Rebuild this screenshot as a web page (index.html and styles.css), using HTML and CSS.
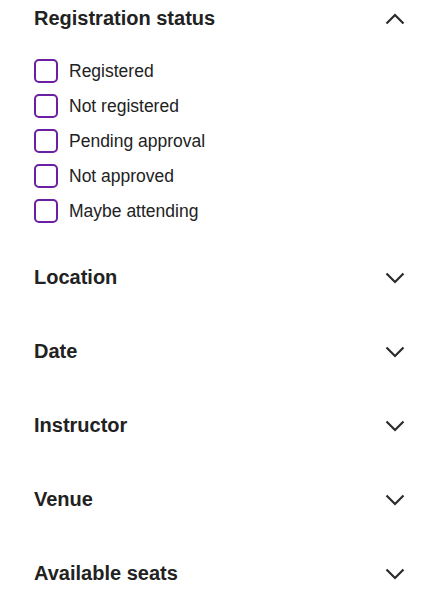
FILE: index.html
```html
<!DOCTYPE html>
<html lang="en">
<head>
<meta charset="utf-8">
<title>Filters</title>
<link rel="stylesheet" href="styles.css">
</head>
<body>
<div class="filters">
  <section class="filter open">
    <div class="filter-head">
      <h2 class="filter-title">Registration status</h2>
      <svg class="chev up" width="20" height="12" viewBox="0 0 20 12"><polyline points="1.5,10.5 10,2 18.5,10.5" fill="none" stroke="#2b2b2b" stroke-width="2.2"/></svg>
    </div>
    <ul class="options">
      <li class="option"><span class="box"></span><span>Registered</span></li>
      <li class="option"><span class="box"></span><span>Not registered</span></li>
      <li class="option"><span class="box"></span><span>Pending approval</span></li>
      <li class="option"><span class="box"></span><span>Not approved</span></li>
      <li class="option"><span class="box"></span><span>Maybe attending</span></li>
    </ul>
  </section>
  <section class="filter">
    <div class="filter-head">
      <h2 class="filter-title">Location</h2>
      <svg class="chev" width="20" height="12" viewBox="0 0 20 12"><polyline points="1.5,1.5 10,10 18.5,1.5" fill="none" stroke="#2b2b2b" stroke-width="2.2"/></svg>
    </div>
  </section>
  <section class="filter">
    <div class="filter-head">
      <h2 class="filter-title">Date</h2>
      <svg class="chev" width="20" height="12" viewBox="0 0 20 12"><polyline points="1.5,1.5 10,10 18.5,1.5" fill="none" stroke="#2b2b2b" stroke-width="2.2"/></svg>
    </div>
  </section>
  <section class="filter">
    <div class="filter-head">
      <h2 class="filter-title">Instructor</h2>
      <svg class="chev" width="20" height="12" viewBox="0 0 20 12"><polyline points="1.5,1.5 10,10 18.5,1.5" fill="none" stroke="#2b2b2b" stroke-width="2.2"/></svg>
    </div>
  </section>
  <section class="filter">
    <div class="filter-head">
      <h2 class="filter-title">Venue</h2>
      <svg class="chev" width="20" height="12" viewBox="0 0 20 12"><polyline points="1.5,1.5 10,10 18.5,1.5" fill="none" stroke="#2b2b2b" stroke-width="2.2"/></svg>
    </div>
  </section>
  <section class="filter">
    <div class="filter-head">
      <h2 class="filter-title">Available seats</h2>
      <svg class="chev" width="20" height="12" viewBox="0 0 20 12"><polyline points="1.5,1.5 10,10 18.5,1.5" fill="none" stroke="#2b2b2b" stroke-width="2.2"/></svg>
    </div>
  </section>
</div>
</body>
</html>
```
FILE: styles.css
```css
html, body {
  margin: 0;
  padding: 0;
  background: #ffffff;
}

body {
  font-family: "Liberation Sans", Arial, sans-serif;
  color: #222222;
}

.filters {
  display: flex;
  flex-direction: column;
  gap: 38px;
  padding: 0 26px 0 34px;
}

.filter-head {
  display: flex;
  align-items: center;
  justify-content: space-between;
  height: 36px;
}

.filter-title {
  margin: 0;
  font-size: 20px;
  font-weight: 700;
  line-height: 24px;
  color: #222222;
}

.chev {
  display: block;
  margin-top: 2px;
}

.options {
  list-style: none;
  margin: 0 0 -2px;
  padding: 23px 0 0;
  display: flex;
  flex-direction: column;
  gap: 11px;
}

.option {
  display: flex;
  align-items: center;
  gap: 11px;
  height: 24px;
  font-size: 17.5px;
  color: #222222;
}

.box {
  box-sizing: border-box;
  width: 24px;
  height: 24px;
  border: 2px solid #6b1fa3;
  border-radius: 5px;
  flex: none;
}
```
